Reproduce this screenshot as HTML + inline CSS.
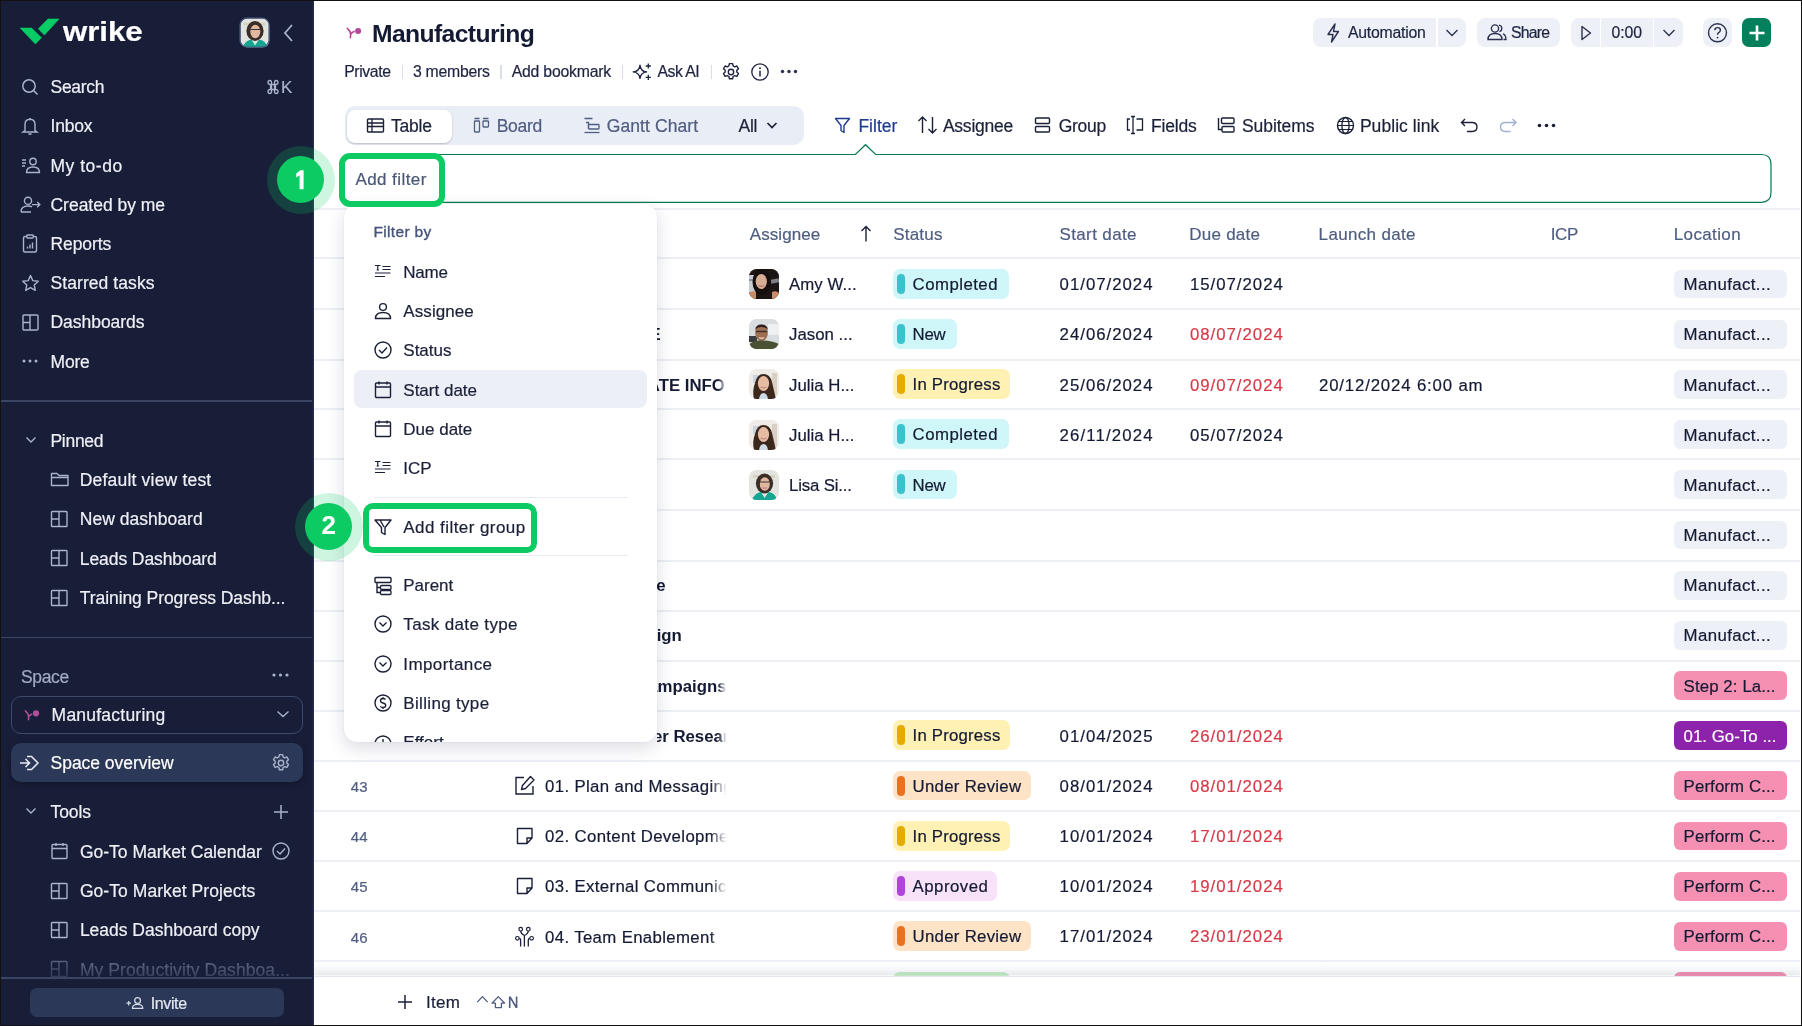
<!DOCTYPE html><html><head><meta charset="utf-8"><style>
html,body{margin:0;padding:0;}
body{width:1802px;height:1026px;position:relative;overflow:hidden;background:#fff;font-family:"Liberation Sans",sans-serif;will-change:transform;}
.t{position:absolute;white-space:pre;-webkit-text-stroke:0.2px currentColor;}
.b{position:absolute;}
</style></head><body>
<div class="b" style="left:0.00px;top:0.00px;width:314.00px;height:1026.00px;background:#181e38;"></div>
<svg class="b" style="left:0;top:0" width="70" height="50" viewBox="0 0 70 50"><path d="M20.2 28.1 L31.6 28.1 L41.5 37.7 L35.4 43.9 Z" fill="#06cc65" stroke="#06cc65" stroke-width="0.6" stroke-linejoin="round"/><path d="M38.3 28.7 L48 19 L59 19 L44.4 35.1 Z" fill="#06cc65" stroke="#06cc65" stroke-width="0.6" stroke-linejoin="round"/></svg>
<div class="t" style="left:63.40px;top:16px;font-size:28px;line-height:31px;color:#ffffff;transform-origin:0 0;transform:scaleX(1.1132);font-weight:700;">wrike</div>
<svg class="b" style="left:239px;top:17px" width="31" height="31" viewBox="0 0 31 31"><defs><clipPath id="ca"><rect x="1" y="1" width="29" height="29" rx="7"/></clipPath></defs><g clip-path="url(#ca)" transform="translate(0.5 0.5)"><rect width="30" height="30" fill="#e3e3df"/><rect x="4" y="5" width="22" height="3" fill="#d8d2c2"/><ellipse cx="15.5" cy="13.5" rx="8.6" ry="10" fill="#3a2d27"/><ellipse cx="15.8" cy="14" rx="5" ry="6.8" fill="#e0b8a0"/><path d="M11 12 H20.5" stroke="#3a3232" stroke-width="1.2"/><path d="M3 30 Q6 22.5 12 22 L15.5 28 L19.5 22 Q26 22.5 28 30Z" fill="#15a692"/></g><rect x="1" y="1" width="29" height="29" rx="7" stroke="#4a5a80" stroke-width="1.2" fill="none"/></svg>
<svg class="b" style="left:281px;top:22px;" width="14" height="22" viewBox="0 0 14 22" fill="none"><path d="M11 3 L4 11 L11 19" stroke="#a9b3ca" stroke-width="1.8" fill="none"/></svg>
<div class="t " style="left:50.50px;top:77px;font-size:17.5px;line-height:20px;color:#eef0f6;letter-spacing:-0.289px;">Search</div>
<div class="t " style="left:50.50px;top:116px;font-size:17.5px;line-height:20px;color:#eef0f6;letter-spacing:-0.202px;">Inbox</div>
<div class="t " style="left:50.50px;top:156px;font-size:17.5px;line-height:20px;color:#eef0f6;letter-spacing:0.518px;">My to-do</div>
<div class="t " style="left:50.50px;top:195px;font-size:17.5px;line-height:20px;color:#eef0f6;letter-spacing:-0.022px;">Created by me</div>
<div class="t " style="left:50.50px;top:234px;font-size:17.5px;line-height:20px;color:#eef0f6;letter-spacing:-0.079px;">Reports</div>
<div class="t " style="left:50.50px;top:273px;font-size:17.5px;line-height:20px;color:#eef0f6;letter-spacing:0.076px;">Starred tasks</div>
<div class="t " style="left:50.50px;top:312px;font-size:17.5px;line-height:20px;color:#eef0f6;letter-spacing:-0.039px;">Dashboards</div>
<div class="t " style="left:50.50px;top:352px;font-size:17.5px;line-height:20px;color:#eef0f6;letter-spacing:-0.189px;">More</div>
<svg class="b" style="left:20px;top:77px;" width="22" height="20" viewBox="0 0 22 20" fill="none"><circle cx="9" cy="9" r="6.2" stroke="#a9b3ca" stroke-width="1.5"/><path d="M13.5 13.5 L17.5 17.5" stroke="#a9b3ca" stroke-width="1.6"/></svg>
<svg class="b" style="left:20px;top:116px;" width="22" height="20" viewBox="0 0 22 20" fill="none"><path d="M5 14.5 L5 8.5 Q5 3.5 10 3.3 Q15 3.5 15 8.5 L15 14.5 L17 16 L3 16 Z" stroke="#a9b3ca" stroke-width="1.4" fill="none"/><path d="M8.5 17.5 Q10 19 11.5 17.5" stroke="#a9b3ca" stroke-width="1.4"/><path d="M10 2 L10 3.5" stroke="#a9b3ca" stroke-width="1.4"/></svg>
<svg class="b" style="left:20px;top:155px;" width="22" height="20" viewBox="0 0 22 20" fill="none"><path d="M2 5h4M2 8h4M2 11h3" stroke="#a9b3ca" stroke-width="1.3"/><circle cx="13" cy="6.5" r="3.2" stroke="#a9b3ca" stroke-width="1.4"/><path d="M6.5 17.5 Q6.5 12 13 12 Q19.5 12 19.5 17.5 Z" stroke="#a9b3ca" stroke-width="1.4"/></svg>
<svg class="b" style="left:20px;top:195px;" width="22" height="20" viewBox="0 0 22 20" fill="none"><circle cx="8" cy="5.8" r="3.6" stroke="#a9b3ca" stroke-width="1.4"/><path d="M1 17 Q1 11 8 11 Q10.5 11 12 11.8 M1 17 H11" stroke="#a9b3ca" stroke-width="1.4" fill="none"/><path d="M12 9.6 H19.8 M17.2 7 L19.8 9.6 L17.2 12.2" stroke="#a9b3ca" stroke-width="1.4" fill="none"/></svg>
<svg class="b" style="left:20px;top:234px;" width="22" height="20" viewBox="0 0 22 20" fill="none"><rect x="3.5" y="2.5" width="13" height="15.5" rx="1.5" stroke="#a9b3ca" stroke-width="1.4"/><rect x="6.8" y="1" width="6.4" height="3" rx="0.8" fill="#181e38" stroke="#a9b3ca" stroke-width="1.3"/><path d="M7.5 14.5v-2M10 14.5v-4M12.5 14.5v-6" stroke="#a9b3ca" stroke-width="1.4"/></svg>
<svg class="b" style="left:20px;top:273px;" width="22" height="20" viewBox="0 0 22 20" fill="none"><path d="M10.5 2.5 L12.8 7.6 L18.3 8.2 L14.2 11.9 L15.3 17.4 L10.5 14.6 L5.7 17.4 L6.8 11.9 L2.7 8.2 L8.2 7.6 Z" stroke="#a9b3ca" stroke-width="1.4" stroke-linejoin="round"/></svg>
<svg class="b" style="left:20px;top:312px;" width="22" height="20" viewBox="0 0 22 20" fill="none"><rect x="3" y="3" width="15" height="15" rx="1" stroke="#a9b3ca" stroke-width="1.4"/><path d="M10 3v15M3 10.5h7" stroke="#a9b3ca" stroke-width="1.4"/></svg>
<svg class="b" style="left:20px;top:351px;" width="22" height="20" viewBox="0 0 22 20" fill="none"><circle cx="4" cy="10" r="1.5" fill="#a9b3ca"/><circle cx="10" cy="10" r="1.5" fill="#a9b3ca"/><circle cx="16" cy="10" r="1.5" fill="#a9b3ca"/></svg>
<svg class="b" style="left:266px;top:79px;" width="14" height="16" viewBox="0 0 14 16" fill="none"><path d="M4.5 5.5h5v5h-5z M4.5 5.5 Q2 5.5 2 3.5 Q2 1.5 3.8 1.5 Q5.5 1.5 5.5 3.5 L5.5 12.5 Q5.5 14.5 3.8 14.5 Q2 14.5 2 12.5 Q2 10.5 4.5 10.5 M9.5 5.5 Q12 5.5 12 3.5 Q12 1.5 10.2 1.5 Q8.5 1.5 8.5 3.5 L8.5 12.5 Q8.5 14.5 10.2 14.5 Q12 14.5 12 12.5 Q12 10.5 9.5 10.5" stroke="#a9b3ca" stroke-width="1.3" fill="none"/></svg>
<div class="t " style="left:281.00px;top:78px;font-size:17px;line-height:19px;color:#a9b3ca;">K</div>
<div class="b" style="left:0.00px;top:400.00px;width:314.00px;height:1.50px;background:#3a4563;"></div>
<div class="b" style="left:0.00px;top:636.50px;width:314.00px;height:1.50px;background:#3a4563;"></div>
<svg class="b" style="left:24px;top:433px;" width="14" height="14" viewBox="0 0 14 14" fill="none"><path d="M2.5 4.5 L7 9 L11.5 4.5" stroke="#a9b3ca" stroke-width="1.4"/></svg>
<div class="t " style="left:50.50px;top:431px;font-size:17.5px;line-height:20px;color:#eef0f6;letter-spacing:-0.298px;">Pinned</div>
<div class="t " style="left:79.80px;top:470px;font-size:17.5px;line-height:20px;color:#eef0f6;letter-spacing:0.189px;">Default view test</div>
<svg class="b" style="left:49px;top:470px;" width="22" height="18" viewBox="0 0 22 18" fill="none"><path d="M2.5 3.5 L8 3.5 L10 5.5 L19 5.5 L19 15.5 L2.5 15.5 Z M2.5 7.5 L19 7.5" stroke="#a9b3ca" stroke-width="1.4" stroke-linejoin="round"/></svg>
<div class="t " style="left:79.80px;top:509px;font-size:17.5px;line-height:20px;color:#eef0f6;letter-spacing:0.028px;">New dashboard</div>
<svg class="b" style="left:49px;top:510px;" width="22" height="18" viewBox="0 0 22 18" fill="none"><rect x="2.5" y="1.5" width="15.5" height="15" rx="0.8" stroke="#a9b3ca" stroke-width="1.4"/><path d="M10 1.5v15M2.5 9h7.5" stroke="#a9b3ca" stroke-width="1.4"/></svg>
<div class="t " style="left:79.80px;top:549px;font-size:17.5px;line-height:20px;color:#eef0f6;letter-spacing:-0.082px;">Leads Dashboard</div>
<svg class="b" style="left:49px;top:549px;" width="22" height="18" viewBox="0 0 22 18" fill="none"><rect x="2.5" y="1.5" width="15.5" height="15" rx="0.8" stroke="#a9b3ca" stroke-width="1.4"/><path d="M10 1.5v15M2.5 9h7.5" stroke="#a9b3ca" stroke-width="1.4"/></svg>
<div class="t " style="left:79.80px;top:588px;font-size:17.5px;line-height:20px;color:#eef0f6;letter-spacing:-0.075px;">Training Progress Dashb...</div>
<svg class="b" style="left:49px;top:589px;" width="22" height="18" viewBox="0 0 22 18" fill="none"><rect x="2.5" y="1.5" width="15.5" height="15" rx="0.8" stroke="#a9b3ca" stroke-width="1.4"/><path d="M10 1.5v15M2.5 9h7.5" stroke="#a9b3ca" stroke-width="1.4"/></svg>
<div class="t " style="left:20.90px;top:667px;font-size:17.5px;line-height:20px;color:#a3abc0;letter-spacing:-0.329px;">Space</div>
<svg class="b" style="left:270px;top:668px;" width="22" height="14" viewBox="0 0 22 14" fill="none"><circle cx="4" cy="7" r="1.6" fill="#a9b3ca"/><circle cx="10.5" cy="7" r="1.6" fill="#a9b3ca"/><circle cx="17" cy="7" r="1.6" fill="#a9b3ca"/></svg>
<div class="b" style="left:11.00px;top:695.80px;width:292.00px;height:38.20px;border:1.3px solid #3e4a6a;border-radius:10px;box-sizing:border-box;"></div>
<svg class="b" style="left:16px;top:700px;" width="30" height="30" viewBox="0 0 30 30" fill="none"><path d="M9.4 10.8 Q12.3 13 12.6 16.5 L12.5 19.6 M15.6 14.3 Q13.5 15.2 12.6 16.8" stroke="#b04f9b" stroke-width="1.6" fill="none" stroke-linecap="round"/><circle cx="20" cy="13.3" r="3.1" fill="#b04f9b"/></svg>
<div class="t " style="left:51.60px;top:705px;font-size:17.5px;line-height:20px;color:#eef0f6;letter-spacing:0.226px;">Manufacturing</div>
<svg class="b" style="left:275px;top:708px;" width="16" height="12" viewBox="0 0 16 12" fill="none"><path d="M2.5 3.5 L8 8.5 L13.5 3.5" stroke="#a9b3ca" stroke-width="1.4"/></svg>
<div class="b" style="left:11.00px;top:743.40px;width:292.00px;height:38.80px;background:#2c3857;border-radius:10px;box-shadow:0 2px 6px rgba(0,0,0,0.25);"></div>
<svg class="b" style="left:18px;top:752px;" width="24" height="22" viewBox="0 0 24 22" fill="none"><path d="M2 11 L11 11 M7.5 7 L11.5 11 L7.5 15" stroke="#e8ebf3" stroke-width="1.6" fill="none"/><path d="M9 4.5 L13.5 4.5 L20 11 L13.5 17.5 L9 17.5" stroke="#e8ebf3" stroke-width="1.6" fill="none" stroke-linejoin="round"/></svg>
<div class="t " style="left:50.60px;top:753px;font-size:17.5px;line-height:20px;color:#ffffff;letter-spacing:-0.041px;">Space overview</div>
<svg class="b" style="left:271px;top:753px;" width="20" height="20" viewBox="0 0 20 20" fill="none"><path d="M8.4 1.6h3.2l.5 2.3 1.6.9 2.2-.8 1.6 2.8-1.7 1.5v1.8l1.7 1.5-1.6 2.8-2.2-.8-1.6.9-.5 2.3H8.4l-.5-2.3-1.6-.9-2.2.8-1.6-2.8 1.7-1.5V8.3L2.5 6.8l1.6-2.8 2.2.8 1.6-.9z" stroke="#a9b3ca" stroke-width="1.4" stroke-linejoin="round"/><circle cx="10" cy="10" r="2.7" stroke="#a9b3ca" stroke-width="1.4"/></svg>
<svg class="b" style="left:24px;top:804px;" width="14" height="14" viewBox="0 0 14 14" fill="none"><path d="M2.5 4.5 L7 9 L11.5 4.5" stroke="#a9b3ca" stroke-width="1.4"/></svg>
<div class="t " style="left:50.60px;top:802px;font-size:17.5px;line-height:20px;color:#eef0f6;letter-spacing:-0.113px;">Tools</div>
<svg class="b" style="left:272px;top:803px;" width="18" height="18" viewBox="0 0 18 18" fill="none"><path d="M9 2v14M2 9h14" stroke="#a9b3ca" stroke-width="1.5"/></svg>
<div class="t " style="left:79.90px;top:842px;font-size:17.5px;line-height:20px;color:#eef0f6;">Go-To Market Calendar</div>
<svg class="b" style="left:49px;top:842px;" width="22" height="18" viewBox="0 0 22 18" fill="none"><rect x="3" y="2.5" width="15" height="14" rx="1" stroke="#a9b3ca" stroke-width="1.4"/><path d="M3 6.5h15M7 1v3M14 1v3" stroke="#a9b3ca" stroke-width="1.4"/></svg>
<div class="t " style="left:79.90px;top:881px;font-size:17.5px;line-height:20px;color:#eef0f6;letter-spacing:0.062px;">Go-To Market Projects</div>
<svg class="b" style="left:49px;top:882px;" width="22" height="18" viewBox="0 0 22 18" fill="none"><rect x="2.5" y="1.5" width="15.5" height="15" rx="0.8" stroke="#a9b3ca" stroke-width="1.4"/><path d="M10 1.5v15M2.5 9h7.5" stroke="#a9b3ca" stroke-width="1.4"/></svg>
<div class="t " style="left:79.90px;top:920px;font-size:17.5px;line-height:20px;color:#eef0f6;letter-spacing:-0.014px;">Leads Dashboard copy</div>
<svg class="b" style="left:49px;top:921px;" width="22" height="18" viewBox="0 0 22 18" fill="none"><rect x="2.5" y="1.5" width="15.5" height="15" rx="0.8" stroke="#a9b3ca" stroke-width="1.4"/><path d="M10 1.5v15M2.5 9h7.5" stroke="#a9b3ca" stroke-width="1.4"/></svg>
<div class="b" style="left:0;top:940px;width:314px;height:37px;overflow:hidden;"><div class="b" style="left:0;top:-940px;width:314px;height:1026px;">
<div class="t " style="left:79.90px;top:960px;font-size:17.5px;line-height:20px;color:#6a7290;letter-spacing:0.075px;">My Productivity Dashboa...</div>
<svg class="b" style="left:49px;top:960px;" width="22" height="18" viewBox="0 0 22 18" fill="none"><rect x="2.5" y="1.5" width="15.5" height="15" rx="0.8" stroke="#5e6684" stroke-width="1.4"/><path d="M10 1.5v15M2.5 9h7.5" stroke="#5e6684" stroke-width="1.4"/></svg>
</div></div>
<svg class="b" style="left:271px;top:841px;" width="20" height="20" viewBox="0 0 20 20" fill="none"><circle cx="10" cy="10" r="8" stroke="#a9b3ca" stroke-width="1.4"/><path d="M6 10 L9 13 L14 7.5" stroke="#a9b3ca" stroke-width="1.4"/></svg>
<div class="b" style="left:0.00px;top:958.00px;width:314.00px;height:19.40px;background:linear-gradient(to bottom, rgba(24,30,56,0) 0%, rgba(24,30,56,0.6) 100%);"></div>
<div class="b" style="left:0.00px;top:977.00px;width:314.00px;height:1.60px;background:#3a4563;"></div>
<div class="b" style="left:30.30px;top:987.80px;width:253.60px;height:29.40px;background:#2c3857;border-radius:7px;"></div>
<svg class="b" style="left:120px;top:990px" width="30" height="24" viewBox="120 990 30 24" fill="none"><path d="M126.4 1003.2h4.6M128.7 1000.9v4.6" stroke="#d5dbe8" stroke-width="1.2"/><circle cx="137.6" cy="1000.4" r="2.9" stroke="#d5dbe8" stroke-width="1.25"/><path d="M132.4 1008.4 Q132.4 1004.3 137.6 1004.3 Q142.8 1004.3 142.8 1008.4 Z" stroke="#d5dbe8" stroke-width="1.25" stroke-linejoin="round"/></svg>
<div class="t " style="left:150.70px;top:995px;font-size:16px;line-height:17px;color:#e3e7f0;letter-spacing:-0.368px;">Invite</div>
<div class="b" style="left:312.00px;top:0.00px;width:2.00px;height:1026.00px;background:linear-gradient(to right, rgba(24,30,56,1), rgba(40,50,80,1));"></div>
<svg class="b" style="left:340px;top:20px;" width="24" height="24" viewBox="0 0 24 24" fill="none"><path d="M7.3 8.3 Q10.3 10.8 10.7 13.8 L10.4 17.8 M14 11.4 Q11.8 12.4 10.9 14" stroke="#b3479b" stroke-width="1.6" fill="none" stroke-linecap="round"/><circle cx="18.1" cy="11" r="3" fill="#b3479b"/></svg>
<div class="t " style="left:372.00px;top:20px;font-size:24.7px;line-height:27px;color:#141a33;font-weight:700;-webkit-text-stroke:0;letter-spacing:-0.611px;">Manufacturing</div>
<div class="t " style="left:344.20px;top:63px;font-size:15.8px;line-height:17px;color:#1d2340;letter-spacing:-0.395px;">Private</div>
<div class="b" style="left:401.80px;top:65.00px;width:1.20px;height:14.00px;background:#d9dde8;"></div>
<div class="t " style="left:413.00px;top:63px;font-size:15.8px;line-height:17px;color:#1d2340;letter-spacing:-0.277px;">3 members</div>
<div class="b" style="left:500.40px;top:65.00px;width:1.20px;height:14.00px;background:#d9dde8;"></div>
<div class="t " style="left:511.70px;top:63px;font-size:15.8px;line-height:17px;color:#1d2340;letter-spacing:-0.215px;">Add bookmark</div>
<div class="b" style="left:622.00px;top:65.00px;width:1.20px;height:14.00px;background:#d9dde8;"></div>
<svg class="b" style="left:620px;top:55px;" width="36" height="32" viewBox="0 0 36 32" fill="none"><path d="M13.2 16.9 Q19.2 16.3 20 10.3 Q20.8 16.3 26.6 16.9 Q20.8 17.6 20 23.4 Q19.2 17.6 13.2 16.9 Z" stroke="#1d2340" stroke-width="1.4" stroke-linejoin="round"/><path d="M28.3 8.4v5.2M25.7 11h5.2M28.3 19.8v5.2M25.7 22.4h5.2" stroke="#1d2340" stroke-width="1.3"/></svg>
<div class="t " style="left:657.60px;top:63px;font-size:15.8px;line-height:17px;color:#1d2340;letter-spacing:-0.557px;">Ask AI</div>
<div class="b" style="left:710.50px;top:65.00px;width:1.20px;height:14.00px;background:#d9dde8;"></div>
<svg class="b" style="left:721px;top:62px;" width="20" height="20" viewBox="0 0 20 20" fill="none"><path d="M8.4 1.6h3.2l.5 2.3 1.6.9 2.2-.8 1.6 2.8-1.7 1.5v1.8l1.7 1.5-1.6 2.8-2.2-.8-1.6.9-.5 2.3H8.4l-.5-2.3-1.6-.9-2.2.8-1.6-2.8 1.7-1.5V8.3L2.5 6.8l1.6-2.8 2.2.8 1.6-.9z" stroke="#1d2340" stroke-width="1.4" stroke-linejoin="round"/><circle cx="10" cy="10" r="2.7" stroke="#1d2340" stroke-width="1.4"/></svg>
<svg class="b" style="left:750px;top:62px;" width="20" height="20" viewBox="0 0 20 20" fill="none"><circle cx="10" cy="10" r="8.2" stroke="#1d2340" stroke-width="1.3"/><path d="M10 8.8v5.8" stroke="#1d2340" stroke-width="1.5"/><circle cx="10" cy="6.2" r="0.95" fill="#1d2340"/></svg>
<svg class="b" style="left:779px;top:62px;" width="20" height="20" viewBox="0 0 20 20" fill="none"><circle cx="3.5" cy="9.5" r="1.7" fill="#2a3150"/><circle cx="10" cy="9.5" r="1.7" fill="#2a3150"/><circle cx="16.5" cy="9.5" r="1.7" fill="#2a3150"/></svg>
<div class="b" style="left:1313.40px;top:18.10px;width:152.90px;height:29.30px;background:#edf0f6;border-radius:8px;"></div>
<div class="b" style="left:1436.00px;top:18.10px;width:1.50px;height:29.30px;background:#ffffff;"></div>
<svg class="b" style="left:1324px;top:22px;" width="18" height="22" viewBox="0 0 18 22" fill="none"><path d="M11 2 L4 12.5 L9 12.5 L7.5 20 L14.5 9.5 L9.5 9.5 Z" stroke="#2a3150" stroke-width="1.4" stroke-linejoin="round"/></svg>
<div class="t " style="left:1347.90px;top:24px;font-size:15.8px;line-height:17px;color:#1d2340;letter-spacing:-0.213px;">Automation</div>
<svg class="b" style="left:1444px;top:27px;" width="16" height="12" viewBox="0 0 16 12" fill="none"><path d="M2.5 3 L8 8.5 L13.5 3" stroke="#2a3150" stroke-width="1.3"/></svg>
<div class="b" style="left:1476.90px;top:18.10px;width:83.50px;height:29.30px;background:#edf0f6;border-radius:8px;"></div>
<svg class="b" style="left:1486px;top:22px;" width="22" height="20" viewBox="0 0 22 20" fill="none"><circle cx="9" cy="6.5" r="3.6" stroke="#2a3150" stroke-width="1.4"/><path d="M2 17.5 Q2 11.5 9 11.5 Q16 11.5 16 17.5 Z" stroke="#2a3150" stroke-width="1.4"/><path d="M13 3.2 Q15.8 3.6 15.8 6.5 Q15.8 9 13.5 9.6 M17 11.8 Q20 12.8 20 17.5 L17.5 17.5" stroke="#2a3150" stroke-width="1.3"/></svg>
<div class="t " style="left:1511.00px;top:24px;font-size:15.8px;line-height:17px;color:#1d2340;letter-spacing:-0.790px;">Share</div>
<div class="b" style="left:1571.00px;top:18.10px;width:112.00px;height:29.30px;background:#edf0f6;border-radius:8px;"></div>
<div class="b" style="left:1599.60px;top:18.10px;width:1.40px;height:29.30px;background:#ffffff;"></div>
<div class="b" style="left:1652.50px;top:18.10px;width:1.50px;height:29.30px;background:#ffffff;"></div>
<svg class="b" style="left:1578px;top:23px;" width="16" height="20" viewBox="0 0 16 20" fill="none"><path d="M4 3.5 L12.5 10 L4 16.5 Z" stroke="#2a3150" stroke-width="1.4" stroke-linejoin="round"/></svg>
<div class="t " style="left:1611.40px;top:24px;font-size:15.8px;line-height:17px;color:#1d2340;letter-spacing:-0.049px;">0:00</div>
<svg class="b" style="left:1661px;top:27px;" width="16" height="12" viewBox="0 0 16 12" fill="none"><path d="M2.5 3 L8 8.5 L13.5 3" stroke="#2a3150" stroke-width="1.3"/></svg>
<div class="b" style="left:1703.00px;top:18.10px;width:28.80px;height:29.30px;background:#edf0f6;border-radius:8px;"></div>
<svg class="b" style="left:1706px;top:22px;" width="24" height="22" viewBox="0 0 24 22" fill="none"><circle cx="11.5" cy="10.8" r="9" stroke="#2a3150" stroke-width="1.4"/><path d="M8.8 8.3 Q8.8 5.6 11.6 5.6 Q14.4 5.6 14.4 8.1 Q14.4 9.8 12.4 10.8 Q11.5 11.3 11.5 12.8" stroke="#2a3150" stroke-width="1.4" fill="none"/><circle cx="11.5" cy="15.6" r="0.95" fill="#2a3150"/></svg>
<div class="b" style="left:1742.00px;top:18.00px;width:29.30px;height:29.40px;background:#06805c;border-radius:7px;"></div>
<svg class="b" style="left:1748px;top:24px;" width="18" height="18" viewBox="0 0 18 18" fill="none"><path d="M9 1.5v15M1.5 9h15" stroke="#ffffff" stroke-width="2.6"/></svg>
<div class="b" style="left:344.50px;top:106.40px;width:459.00px;height:38.90px;background:#e9edf6;border-radius:10px;"></div>
<div class="b" style="left:346.50px;top:109.60px;width:105.20px;height:33.00px;background:#ffffff;border-radius:8px;box-shadow:0 1px 2px rgba(30,40,80,0.25);"></div>
<svg class="b" style="left:365px;top:116px;" width="22" height="20" viewBox="0 0 22 20" fill="none"><rect x="2.5" y="3" width="16" height="13" rx="1" stroke="#1b2038" stroke-width="1.4"/><path d="M2.5 7h16M2.5 10.5h16M7 3v13" stroke="#1b2038" stroke-width="1.3"/></svg>
<div class="t " style="left:391.00px;top:116px;font-size:17.5px;line-height:20px;color:#1b2038;letter-spacing:-0.208px;">Table</div>
<svg class="b" style="left:472px;top:116px;" width="20" height="20" viewBox="0 0 20 20" fill="none"><rect x="2.5" y="5" width="5" height="11" rx="0.8" stroke="#4f5d80" stroke-width="1.3"/><rect x="11" y="5" width="5.5" height="6" rx="0.8" stroke="#4f5d80" stroke-width="1.3"/><path d="M2.5 2.5h5M11 2.5h5.5" stroke="#4f5d80" stroke-width="1.3"/></svg>
<div class="t " style="left:496.70px;top:116px;font-size:17.5px;line-height:20px;color:#4f5d80;letter-spacing:-0.299px;">Board</div>
<svg class="b" style="left:582px;top:116px;" width="20" height="20" viewBox="0 0 20 20" fill="none"><path d="M2.5 2.5h8M4 6.5h2.5v6.5" stroke="#4f5d80" stroke-width="1.3" fill="none"/><rect x="6.5" y="8.5" width="10.5" height="4.5" rx="0.8" stroke="#4f5d80" stroke-width="1.3"/><path d="M2.5 16.5h15" stroke="#4f5d80" stroke-width="1.3"/></svg>
<div class="t " style="left:606.70px;top:116px;font-size:17.5px;line-height:20px;color:#4f5d80;letter-spacing:0.095px;">Gantt Chart</div>
<div class="t " style="left:738.50px;top:116px;font-size:17.5px;line-height:20px;color:#1b2038;letter-spacing:-0.275px;">All</div>
<svg class="b" style="left:765px;top:120px;" width="14" height="12" viewBox="0 0 14 12" fill="none"><path d="M2.5 3 L7 7.5 L11.5 3" stroke="#1b2038" stroke-width="1.7"/></svg>
<svg class="b" style="left:833px;top:115px;" width="19" height="20" viewBox="0 0 19 20" fill="none"><path d="M2.5 3.5 L16.5 3.5 L11 10.5 L11 17.5 L8 15.5 L8 10.5 Z" stroke="#1f3b90" stroke-width="1.4" stroke-linejoin="round"/></svg>
<div class="t " style="left:858.40px;top:116px;font-size:17.5px;line-height:20px;color:#1f3b90;letter-spacing:0.023px;">Filter</div>
<svg class="b" style="left:917px;top:114px;" width="22" height="22" viewBox="0 0 22 22" fill="none"><path d="M5.5 19 L5.5 3 M1.5 7 L5.5 3 L9.5 7 M15.5 3 L15.5 19 M11.5 15 L15.5 19 L19.5 15" stroke="#1b2038" stroke-width="1.4" fill="none"/></svg>
<div class="t " style="left:942.90px;top:116px;font-size:17.5px;line-height:20px;color:#1b2038;letter-spacing:-0.227px;">Assignee</div>
<svg class="b" style="left:1033px;top:115px;" width="20" height="20" viewBox="0 0 20 20" fill="none"><rect x="2.5" y="3" width="14" height="5.5" rx="1" stroke="#1b2038" stroke-width="1.4"/><rect x="2.5" y="11.5" width="14" height="5.5" rx="1" stroke="#1b2038" stroke-width="1.4"/></svg>
<div class="t " style="left:1058.80px;top:116px;font-size:17.5px;line-height:20px;color:#1b2038;letter-spacing:-0.308px;">Group</div>
<svg class="b" style="left:1125px;top:114px;" width="22" height="22" viewBox="0 0 22 22" fill="none"><path d="M5 5 L2.5 5 L2.5 16 L5 16 M11.5 5 L17.5 5 L17.5 16 L11.5 16 M6 2.5 L10 2.5 M8 2.5 L8 19.5 M6 19.5 L10 19.5" stroke="#1b2038" stroke-width="1.3" fill="none"/></svg>
<div class="t " style="left:1151.00px;top:116px;font-size:17.5px;line-height:20px;color:#1b2038;letter-spacing:-0.196px;">Fields</div>
<svg class="b" style="left:1216px;top:115px;" width="22" height="20" viewBox="0 0 22 20" fill="none"><path d="M2.5 3 L2.5 14.5 L6 14.5" stroke="#1b2038" stroke-width="1.4" fill="none"/><rect x="5.5" y="3" width="12.5" height="5.5" rx="1" stroke="#1b2038" stroke-width="1.4"/><rect x="6" y="11.5" width="12" height="5.5" rx="1" stroke="#1b2038" stroke-width="1.4"/></svg>
<div class="t " style="left:1242.00px;top:116px;font-size:17.5px;line-height:20px;color:#1b2038;letter-spacing:-0.064px;">Subitems</div>
<svg class="b" style="left:1335px;top:115px;" width="21" height="21" viewBox="0 0 21 21" fill="none"><circle cx="10.5" cy="10.5" r="8" stroke="#1b2038" stroke-width="1.4"/><ellipse cx="10.5" cy="10.5" rx="3.6" ry="8" stroke="#1b2038" stroke-width="1.3"/><path d="M2.5 10.5h16M3.8 6.5h13.4M3.8 14.5h13.4" stroke="#1b2038" stroke-width="1.2"/></svg>
<div class="t " style="left:1359.90px;top:116px;font-size:17.5px;line-height:20px;color:#1b2038;letter-spacing:0.062px;">Public link</div>
<svg class="b" style="left:1459px;top:116px;" width="22" height="18" viewBox="0 0 22 18" fill="none"><path d="M6 3 L2.5 6.5 L6 10 M2.5 6.5 L13 6.5 Q18 6.5 18 11 Q18 15.5 13 15.5 L8 15.5" stroke="#1b2038" stroke-width="1.4" fill="none"/></svg>
<svg class="b" style="left:1498px;top:116px;" width="22" height="18" viewBox="0 0 22 18" fill="none"><path d="M14.5 3 L18 6.5 L14.5 10 M18 6.5 L7.5 6.5 Q2.5 6.5 2.5 11 Q2.5 15.5 7.5 15.5 L12.5 15.5" stroke="#9fb0d0" stroke-width="1.4" fill="none"/></svg>
<svg class="b" style="left:1536px;top:116px;" width="22" height="18" viewBox="0 0 22 18" fill="none"><circle cx="3.5" cy="9.5" r="1.8" fill="#1b2038"/><circle cx="10.5" cy="9.5" r="1.8" fill="#1b2038"/><circle cx="17.5" cy="9.5" r="1.8" fill="#1b2038"/></svg>
<svg class="b" style="left:330px;top:140px" width="1450" height="70" viewBox="330 140 1450 70" fill="none"><path d="M353.5 154.5 L855.4 154.5 L865.5 144.7 L875.6 154.5 L1761.3 154.5 Q1771 154.5 1771 164.3 L1771 192.5 Q1771 202.3 1761.3 202.3 L353.5 202.3 Q342.8 202.3 342.8 192.5 L342.8 164.3 Q342.8 154.5 353.5 154.5 Z" fill="#ffffff" stroke="#067a52" stroke-width="1.2"/></svg>
<div class="t " style="left:355.50px;top:170px;font-size:17px;line-height:19px;color:#4a5778;letter-spacing:0.413px;">Add filter</div>
<div class="b" style="left:314.00px;top:208.00px;width:1486.00px;height:2.00px;background:#eef0f5;"></div>
<div class="t " style="left:749.80px;top:225px;font-size:17px;line-height:19px;color:#4f5d80;letter-spacing:0.067px;">Assignee</div>
<svg class="b" style="left:857px;top:224px;" width="18" height="19" viewBox="0 0 18 19" fill="none"><path d="M9 17.5 L9 2.5 M4.5 7 L9 2.5 L13.5 7" stroke="#1b2038" stroke-width="1.4" fill="none"/></svg>
<div class="t " style="left:893.20px;top:225px;font-size:17px;line-height:19px;color:#4f5d80;letter-spacing:0.222px;">Status</div>
<div class="t " style="left:1059.50px;top:225px;font-size:17px;line-height:19px;color:#4f5d80;letter-spacing:0.366px;">Start date</div>
<div class="t " style="left:1189.30px;top:225px;font-size:17px;line-height:19px;color:#4f5d80;letter-spacing:0.230px;">Due date</div>
<div class="t " style="left:1318.60px;top:225px;font-size:17px;line-height:19px;color:#4f5d80;letter-spacing:0.333px;">Launch date</div>
<div class="t " style="left:1550.80px;top:225px;font-size:17px;line-height:19px;color:#4f5d80;letter-spacing:-0.420px;">ICP</div>
<div class="t " style="left:1673.80px;top:225px;font-size:17px;line-height:19px;color:#4f5d80;letter-spacing:0.362px;">Location</div>
<div class="b" style="left:314.00px;top:257.00px;width:1486.00px;height:2.00px;background:#eceff4;"></div>
<div class="b" style="left:314.00px;top:308.00px;width:1486.00px;height:2.00px;background:#eceff4;"></div>
<div class="b" style="left:314.00px;top:359.00px;width:1486.00px;height:2.00px;background:#eceff4;"></div>
<div class="b" style="left:314.00px;top:408.00px;width:1486.00px;height:2.00px;background:#eceff4;"></div>
<div class="b" style="left:314.00px;top:458.00px;width:1486.00px;height:2.00px;background:#eceff4;"></div>
<div class="b" style="left:314.00px;top:509.00px;width:1486.00px;height:2.00px;background:#eceff4;"></div>
<div class="b" style="left:314.00px;top:560.00px;width:1486.00px;height:2.00px;background:#eceff4;"></div>
<div class="b" style="left:314.00px;top:610.00px;width:1486.00px;height:2.00px;background:#eceff4;"></div>
<div class="b" style="left:314.00px;top:660.00px;width:1486.00px;height:2.00px;background:#eceff4;"></div>
<div class="b" style="left:314.00px;top:710.00px;width:1486.00px;height:2.00px;background:#eceff4;"></div>
<div class="b" style="left:314.00px;top:760.00px;width:1486.00px;height:2.00px;background:#eceff4;"></div>
<div class="b" style="left:314.00px;top:810.00px;width:1486.00px;height:2.00px;background:#eceff4;"></div>
<div class="b" style="left:314.00px;top:860.00px;width:1486.00px;height:2.00px;background:#eceff4;"></div>
<div class="b" style="left:314.00px;top:910.00px;width:1486.00px;height:2.00px;background:#eceff4;"></div>
<div class="b" style="left:314.00px;top:960.00px;width:1486.00px;height:2.00px;background:#eceff4;"></div>
<svg class="b" style="left:749px;top:269px" width="30" height="30" viewBox="0 0 30 30"><defs><clipPath id="av0"><rect width="30" height="30" rx="7.5"/></clipPath></defs><g clip-path="url(#av0)"><rect width="30" height="30" fill="#1b1513"/><rect x="0" y="6" width="7" height="18" fill="#c9cdd3"/><rect x="0" y="10" width="7" height="2" fill="#8a9099"/><rect x="22" y="10" width="8" height="4" fill="#7d7f86" transform="rotate(-10 26 12)"/><ellipse cx="12.5" cy="13" rx="9" ry="13" fill="#150f0d"/><ellipse cx="12.3" cy="12.5" rx="5.6" ry="7.6" fill="#d8ad96"/><path d="M9.5 16.5 Q12.3 18.2 15 16.5" stroke="#b47a76" stroke-width="1.2" fill="none"/><path d="M0 24 Q3 21 7 23 L7 30 L0 30Z M23 23 Q27 21 30 24 L30 30 L23 30Z" fill="#c98c69"/></g></svg>
<div class="t " style="left:789.00px;top:275px;font-size:16.8px;line-height:19px;color:#141a33;letter-spacing:0.071px;">Amy W...</div>
<div class="b" style="left:892.50px;top:268.90px;width:116.20px;height:29.80px;background:#cff7f9;border-radius:7px;"></div>
<div class="b" style="left:897.10px;top:273.80px;width:7.60px;height:20.00px;background:#3bc2cc;border-radius:4px;"></div>
<div class="t " style="left:912.60px;top:275px;font-size:16.8px;line-height:19px;color:#141a33;letter-spacing:0.470px;">Completed</div>
<div class="t " style="left:1059.60px;top:275px;font-size:16.8px;line-height:19px;color:#141a33;letter-spacing:0.992px;">01/07/2024</div>
<div class="t " style="left:1189.90px;top:275px;font-size:16.8px;line-height:19px;color:#141a33;letter-spacing:0.992px;">15/07/2024</div>
<div class="b" style="left:1673.80px;top:269.70px;width:113.40px;height:28.80px;background:#edf0f6;border-radius:6px;"></div>
<div class="t " style="left:1683.60px;top:275px;font-size:16.8px;line-height:19px;color:#141a33;letter-spacing:0.400px;">Manufact...</div>
<div class="b" style="left:657px;top:310px;width:69px;height:40px;overflow:hidden;">
<div class="t" style="right:65.20px;top:15px;font-size:16.8px;line-height:19px;color:#141a33;font-weight:700;-webkit-text-stroke:0;">UPDATE</div>
</div>
<svg class="b" style="left:749px;top:319px" width="30" height="30" viewBox="0 0 30 30"><defs><clipPath id="av1"><rect width="30" height="30" rx="7.5"/></clipPath></defs><g clip-path="url(#av1)"><rect width="30" height="30" fill="#d9dde0"/><rect x="19" y="5" width="11" height="11" fill="#eef0f2"/><rect x="0" y="17" width="8" height="6" fill="#3a3c40"/><ellipse cx="12.5" cy="14" rx="6.4" ry="8.2" fill="#a06f52"/><path d="M6.2 11 Q6.5 5.5 12.5 5.5 Q18.5 5.5 18.8 11 Q17 8 12.5 8 Q8 8 6.2 11Z" fill="#2a1f1a"/><path d="M7 12.5 H18" stroke="#3a3030" stroke-width="1.3"/><path d="M10 18.5 Q12.5 20 15 18.5" stroke="#e8d0c8" stroke-width="1.3" fill="none"/><path d="M0 30 L0 26 Q3 21 12.5 21.5 Q22 21 30 25 L30 30Z" fill="#4b5133"/></g></svg>
<div class="t " style="left:789.00px;top:325px;font-size:16.8px;line-height:19px;color:#141a33;letter-spacing:0.025px;">Jason ...</div>
<div class="b" style="left:892.50px;top:319.07px;width:64.20px;height:29.80px;background:#cff7f9;border-radius:7px;"></div>
<div class="b" style="left:897.10px;top:323.97px;width:7.60px;height:20.00px;background:#3bc2cc;border-radius:4px;"></div>
<div class="t " style="left:912.60px;top:325px;font-size:16.8px;line-height:19px;color:#141a33;letter-spacing:-0.304px;">New</div>
<div class="t " style="left:1059.60px;top:325px;font-size:16.8px;line-height:19px;color:#141a33;letter-spacing:0.992px;">24/06/2024</div>
<div class="t " style="left:1189.90px;top:325px;font-size:16.8px;line-height:19px;color:#d63a47;letter-spacing:0.992px;">08/07/2024</div>
<div class="b" style="left:1673.80px;top:319.87px;width:113.40px;height:28.80px;background:#edf0f6;border-radius:6px;"></div>
<div class="t " style="left:1683.60px;top:325px;font-size:16.8px;line-height:19px;color:#141a33;letter-spacing:0.400px;">Manufact...</div>
<div class="b" style="left:657px;top:361px;width:69px;height:40px;overflow:hidden;-webkit-mask-image:linear-gradient(to right,#000 88.4%,rgba(0,0,0,0.05) 100%);">
<div class="t" style="left:-44.60px;top:15px;font-size:16.8px;line-height:19px;color:#141a33;font-weight:700;-webkit-text-stroke:0;">UPDATE INFO</div>
</div>
<svg class="b" style="left:749px;top:369px" width="30" height="30" viewBox="0 0 30 30"><defs><clipPath id="av2"><rect width="30" height="30" rx="7.5"/></clipPath></defs><g clip-path="url(#av2)"><rect width="30" height="30" fill="#efebe6"/><rect x="23" y="4" width="5" height="22" fill="#d9cfc4"/><rect x="4" y="6" width="6" height="8" fill="#c9d4de"/><path d="M5 30 Q3 22 6 14 Q8 5 14.5 5 Q21 5 23 13 Q25 22 27 30Z" fill="#3b271c"/><ellipse cx="14.5" cy="14.5" rx="5.6" ry="7.4" fill="#e6bda3"/><path d="M11.5 18 Q14.5 19.8 17.5 18" stroke="#c98a86" stroke-width="1.1" fill="none"/><path d="M10 30 Q11 24 14.5 24 Q18 24 19 30Z" fill="#cddbe6"/></g></svg>
<div class="t " style="left:789.00px;top:376px;font-size:16.8px;line-height:19px;color:#141a33;letter-spacing:0.016px;">Julia H...</div>
<div class="b" style="left:892.50px;top:369.24px;width:117.50px;height:29.80px;background:#fff0b3;border-radius:7px;"></div>
<div class="b" style="left:897.10px;top:374.14px;width:7.60px;height:20.00px;background:#e6ab00;border-radius:4px;"></div>
<div class="t " style="left:912.60px;top:375px;font-size:16.8px;line-height:19px;color:#141a33;letter-spacing:0.190px;">In Progress</div>
<div class="t " style="left:1059.60px;top:376px;font-size:16.8px;line-height:19px;color:#141a33;letter-spacing:0.992px;">25/06/2024</div>
<div class="t " style="left:1189.90px;top:376px;font-size:16.8px;line-height:19px;color:#d63a47;letter-spacing:0.992px;">09/07/2024</div>
<div class="t " style="left:1319.00px;top:376px;font-size:16.8px;line-height:19px;color:#141a33;letter-spacing:0.839px;">20/12/2024 6:00 am</div>
<div class="b" style="left:1673.80px;top:370.04px;width:113.40px;height:28.80px;background:#edf0f6;border-radius:6px;"></div>
<div class="t " style="left:1683.60px;top:376px;font-size:16.8px;line-height:19px;color:#141a33;letter-spacing:0.400px;">Manufact...</div>
<svg class="b" style="left:749px;top:420px" width="30" height="30" viewBox="0 0 30 30"><defs><clipPath id="av3"><rect width="30" height="30" rx="7.5"/></clipPath></defs><g clip-path="url(#av3)"><rect width="30" height="30" fill="#efebe6"/><rect x="23" y="4" width="5" height="22" fill="#d9cfc4"/><rect x="4" y="6" width="6" height="8" fill="#c9d4de"/><path d="M5 30 Q3 22 6 14 Q8 5 14.5 5 Q21 5 23 13 Q25 22 27 30Z" fill="#3b271c"/><ellipse cx="14.5" cy="14.5" rx="5.6" ry="7.4" fill="#e6bda3"/><path d="M11.5 18 Q14.5 19.8 17.5 18" stroke="#c98a86" stroke-width="1.1" fill="none"/><path d="M10 30 Q11 24 14.5 24 Q18 24 19 30Z" fill="#cddbe6"/></g></svg>
<div class="t " style="left:789.00px;top:426px;font-size:16.8px;line-height:19px;color:#141a33;letter-spacing:0.016px;">Julia H...</div>
<div class="b" style="left:892.50px;top:419.41px;width:116.20px;height:29.80px;background:#cff7f9;border-radius:7px;"></div>
<div class="b" style="left:897.10px;top:424.31px;width:7.60px;height:20.00px;background:#3bc2cc;border-radius:4px;"></div>
<div class="t " style="left:912.60px;top:425px;font-size:16.8px;line-height:19px;color:#141a33;letter-spacing:0.470px;">Completed</div>
<div class="t " style="left:1059.60px;top:426px;font-size:16.8px;line-height:19px;color:#141a33;letter-spacing:1.130px;">26/11/2024</div>
<div class="t " style="left:1189.90px;top:426px;font-size:16.8px;line-height:19px;color:#141a33;letter-spacing:0.992px;">05/07/2024</div>
<div class="b" style="left:1673.80px;top:420.21px;width:113.40px;height:28.80px;background:#edf0f6;border-radius:6px;"></div>
<div class="t " style="left:1683.60px;top:426px;font-size:16.8px;line-height:19px;color:#141a33;letter-spacing:0.400px;">Manufact...</div>
<svg class="b" style="left:749px;top:470px" width="30" height="30" viewBox="0 0 30 30"><defs><clipPath id="av4"><rect width="30" height="30" rx="7.5"/></clipPath></defs><g clip-path="url(#av4)"><rect width="30" height="30" fill="#e3e3df"/><rect x="4" y="5" width="22" height="3" fill="#d8d2c2"/><ellipse cx="15.5" cy="13.5" rx="8.6" ry="10" fill="#3a2d27"/><ellipse cx="15.8" cy="14" rx="5" ry="6.8" fill="#e0b8a0"/><path d="M11 12 H20.5" stroke="#3a3232" stroke-width="1.2"/><path d="M13.5 17.5 Q15.8 19 18 17.5" stroke="#c27a80" stroke-width="1.1" fill="none"/><path d="M3 30 Q6 22.5 12 22 L15.5 28 L19.5 22 Q26 22.5 28 30Z" fill="#15a692"/></g></svg>
<div class="t " style="left:789.00px;top:476px;font-size:16.8px;line-height:19px;color:#141a33;letter-spacing:-0.158px;">Lisa Si...</div>
<div class="b" style="left:892.50px;top:469.58px;width:64.20px;height:29.80px;background:#cff7f9;border-radius:7px;"></div>
<div class="b" style="left:897.10px;top:474.48px;width:7.60px;height:20.00px;background:#3bc2cc;border-radius:4px;"></div>
<div class="t " style="left:912.60px;top:476px;font-size:16.8px;line-height:19px;color:#141a33;letter-spacing:-0.304px;">New</div>
<div class="b" style="left:1673.80px;top:470.38px;width:113.40px;height:28.80px;background:#edf0f6;border-radius:6px;"></div>
<div class="t " style="left:1683.60px;top:476px;font-size:16.8px;line-height:19px;color:#141a33;letter-spacing:0.400px;">Manufact...</div>
<div class="b" style="left:1673.80px;top:520.55px;width:113.40px;height:28.80px;background:#edf0f6;border-radius:6px;"></div>
<div class="t " style="left:1683.60px;top:526px;font-size:16.8px;line-height:19px;color:#141a33;letter-spacing:0.400px;">Manufact...</div>
<div class="b" style="left:657px;top:561px;width:69px;height:40px;overflow:hidden;">
<div class="t" style="right:60.40px;top:15px;font-size:16.8px;line-height:19px;color:#141a33;font-weight:700;-webkit-text-stroke:0;">Prepare</div>
</div>
<div class="b" style="left:1673.80px;top:570.72px;width:113.40px;height:28.80px;background:#edf0f6;border-radius:6px;"></div>
<div class="t " style="left:1683.60px;top:576px;font-size:16.8px;line-height:19px;color:#141a33;letter-spacing:0.400px;">Manufact...</div>
<div class="b" style="left:657px;top:611px;width:69px;height:40px;overflow:hidden;">
<div class="t" style="right:44.20px;top:15px;font-size:16.8px;line-height:19px;color:#141a33;font-weight:700;-webkit-text-stroke:0;">Campaign</div>
</div>
<div class="b" style="left:1673.80px;top:620.89px;width:113.40px;height:28.80px;background:#edf0f6;border-radius:6px;"></div>
<div class="t " style="left:1683.60px;top:626px;font-size:16.8px;line-height:19px;color:#141a33;letter-spacing:0.400px;">Manufact...</div>
<div class="b" style="left:657px;top:662px;width:69px;height:40px;overflow:hidden;-webkit-mask-image:linear-gradient(to right,#000 88.4%,rgba(0,0,0,0.05) 100%);">
<div class="t" style="left:-20.98px;top:15px;font-size:16.8px;line-height:19px;color:#141a33;font-weight:700;-webkit-text-stroke:0;">Campaigns</div>
</div>
<div class="b" style="left:1673.80px;top:671.06px;width:113.40px;height:28.80px;background:#f590b3;border-radius:6px;"></div>
<div class="t " style="left:1683.60px;top:677px;font-size:16.8px;line-height:19px;color:#141a33;letter-spacing:0.118px;">Step 2: La...</div>
<div class="b" style="left:657px;top:712px;width:69px;height:40px;overflow:hidden;-webkit-mask-image:linear-gradient(to right,#000 88.4%,rgba(0,0,0,0.05) 100%);">
<div class="t" style="left:-66.58px;top:15px;font-size:16.8px;line-height:19px;color:#141a33;font-weight:700;-webkit-text-stroke:0;">Customer Research</div>
</div>
<div class="b" style="left:892.50px;top:720.43px;width:117.50px;height:29.80px;background:#fff0b3;border-radius:7px;"></div>
<div class="b" style="left:897.10px;top:725.33px;width:7.60px;height:20.00px;background:#e6ab00;border-radius:4px;"></div>
<div class="t " style="left:912.60px;top:726px;font-size:16.8px;line-height:19px;color:#141a33;letter-spacing:0.190px;">In Progress</div>
<div class="t " style="left:1059.60px;top:727px;font-size:16.8px;line-height:19px;color:#141a33;letter-spacing:0.992px;">01/04/2025</div>
<div class="t " style="left:1189.90px;top:727px;font-size:16.8px;line-height:19px;color:#d63a47;letter-spacing:0.992px;">26/01/2024</div>
<div class="b" style="left:1673.80px;top:721.23px;width:113.40px;height:28.80px;background:#8d22ab;border-radius:6px;"></div>
<div class="t " style="left:1683.60px;top:727px;font-size:16.8px;line-height:19px;color:#ffffff;letter-spacing:0.047px;">01. Go-To ...</div>
<div class="b" style="left:892.50px;top:770.60px;width:138.20px;height:29.80px;background:#ffe3c6;border-radius:7px;"></div>
<div class="b" style="left:897.10px;top:775.50px;width:7.60px;height:20.00px;background:#e8721f;border-radius:4px;"></div>
<div class="t " style="left:912.60px;top:777px;font-size:16.8px;line-height:19px;color:#141a33;letter-spacing:0.281px;">Under Review</div>
<div class="t " style="left:1059.60px;top:777px;font-size:16.8px;line-height:19px;color:#141a33;letter-spacing:0.992px;">08/01/2024</div>
<div class="t " style="left:1189.90px;top:777px;font-size:16.8px;line-height:19px;color:#d63a47;letter-spacing:0.992px;">08/01/2024</div>
<div class="b" style="left:1673.80px;top:771.40px;width:113.40px;height:28.80px;background:#f590b3;border-radius:6px;"></div>
<div class="t " style="left:1683.60px;top:777px;font-size:16.8px;line-height:19px;color:#141a33;letter-spacing:0.133px;">Perform C...</div>
<div class="t " style="left:350.80px;top:778px;font-size:15px;line-height:17px;color:#4f5d80;">43</div>
<svg class="b" style="left:513px;top:774px;" width="24" height="22" viewBox="0 0 24 22" fill="none"><path d="M11 3.5 L3 3.5 L3 20 L20 20 L20 12" stroke="#1b2038" stroke-width="1.4" fill="none"/><path d="M17.5 2.5 L21 6 L12.5 14.5 L8.5 15.5 L9.5 11.5 Z" stroke="#1b2038" stroke-width="1.4" stroke-linejoin="round"/></svg>
<div class="b" style="left:545px;top:762px;width:181px;height:40px;overflow:hidden;-webkit-mask-image:linear-gradient(to right,#000 91.2%,rgba(0,0,0,0.05) 100%);">
<div class="t" style="left:0.10px;top:15px;font-size:16.8px;line-height:19px;color:#141a33;letter-spacing:0.35px;">01. Plan and Messaging</div>
</div>
<div class="b" style="left:892.50px;top:820.77px;width:117.50px;height:29.80px;background:#fff0b3;border-radius:7px;"></div>
<div class="b" style="left:897.10px;top:825.67px;width:7.60px;height:20.00px;background:#e6ab00;border-radius:4px;"></div>
<div class="t " style="left:912.60px;top:827px;font-size:16.8px;line-height:19px;color:#141a33;letter-spacing:0.190px;">In Progress</div>
<div class="t " style="left:1059.60px;top:827px;font-size:16.8px;line-height:19px;color:#141a33;letter-spacing:0.992px;">10/01/2024</div>
<div class="t " style="left:1189.90px;top:827px;font-size:16.8px;line-height:19px;color:#d63a47;letter-spacing:0.992px;">17/01/2024</div>
<div class="b" style="left:1673.80px;top:821.57px;width:113.40px;height:28.80px;background:#f590b3;border-radius:6px;"></div>
<div class="t " style="left:1683.60px;top:827px;font-size:16.8px;line-height:19px;color:#141a33;letter-spacing:0.133px;">Perform C...</div>
<div class="t " style="left:350.80px;top:828px;font-size:15px;line-height:17px;color:#4f5d80;">44</div>
<svg class="b" style="left:513px;top:825px;" width="24" height="22" viewBox="0 0 24 22" fill="none"><path d="M4.5 3.5 L19 3.5 L19 13 L14 18.5 L4.5 18.5 Z M19 13 L14 13 L14 18.5" stroke="#1b2038" stroke-width="1.4" stroke-linejoin="round" fill="none"/></svg>
<div class="b" style="left:545px;top:812px;width:181px;height:40px;overflow:hidden;-webkit-mask-image:linear-gradient(to right,#000 91.2%,rgba(0,0,0,0.05) 100%);">
<div class="t" style="left:0.10px;top:15px;font-size:16.8px;line-height:19px;color:#141a33;letter-spacing:0.35px;">02. Content Development</div>
</div>
<div class="b" style="left:892.50px;top:870.94px;width:104.90px;height:29.80px;background:#f7e2fa;border-radius:7px;"></div>
<div class="b" style="left:897.10px;top:875.84px;width:7.60px;height:20.00px;background:#b144d8;border-radius:4px;"></div>
<div class="t " style="left:912.60px;top:877px;font-size:16.8px;line-height:19px;color:#141a33;letter-spacing:0.484px;">Approved</div>
<div class="t " style="left:1059.60px;top:877px;font-size:16.8px;line-height:19px;color:#141a33;letter-spacing:0.992px;">10/01/2024</div>
<div class="t " style="left:1189.90px;top:877px;font-size:16.8px;line-height:19px;color:#d63a47;letter-spacing:0.992px;">19/01/2024</div>
<div class="b" style="left:1673.80px;top:871.74px;width:113.40px;height:28.80px;background:#f590b3;border-radius:6px;"></div>
<div class="t " style="left:1683.60px;top:877px;font-size:16.8px;line-height:19px;color:#141a33;letter-spacing:0.133px;">Perform C...</div>
<div class="t " style="left:350.80px;top:878px;font-size:15px;line-height:17px;color:#4f5d80;">45</div>
<svg class="b" style="left:513px;top:875px;" width="24" height="22" viewBox="0 0 24 22" fill="none"><path d="M4.5 3.5 L19 3.5 L19 13 L14 18.5 L4.5 18.5 Z M19 13 L14 13 L14 18.5" stroke="#1b2038" stroke-width="1.4" stroke-linejoin="round" fill="none"/></svg>
<div class="b" style="left:545px;top:862px;width:181px;height:40px;overflow:hidden;-webkit-mask-image:linear-gradient(to right,#000 91.2%,rgba(0,0,0,0.05) 100%);">
<div class="t" style="left:0.10px;top:15px;font-size:16.8px;line-height:19px;color:#141a33;letter-spacing:0.35px;">03. External Communications</div>
</div>
<div class="b" style="left:892.50px;top:921.11px;width:138.20px;height:29.80px;background:#ffe3c6;border-radius:7px;"></div>
<div class="b" style="left:897.10px;top:926.01px;width:7.60px;height:20.00px;background:#e8721f;border-radius:4px;"></div>
<div class="t " style="left:912.60px;top:927px;font-size:16.8px;line-height:19px;color:#141a33;letter-spacing:0.281px;">Under Review</div>
<div class="t " style="left:1059.60px;top:927px;font-size:16.8px;line-height:19px;color:#141a33;letter-spacing:0.992px;">17/01/2024</div>
<div class="t " style="left:1189.90px;top:927px;font-size:16.8px;line-height:19px;color:#d63a47;letter-spacing:0.992px;">23/01/2024</div>
<div class="b" style="left:1673.80px;top:921.91px;width:113.40px;height:28.80px;background:#f590b3;border-radius:6px;"></div>
<div class="t " style="left:1683.60px;top:927px;font-size:16.8px;line-height:19px;color:#141a33;letter-spacing:0.133px;">Perform C...</div>
<div class="t " style="left:350.80px;top:929px;font-size:15px;line-height:17px;color:#4f5d80;">46</div>
<svg class="b" style="left:510px;top:920px" width="30" height="30" viewBox="510 920 30 30" fill="none"><circle cx="520.7" cy="929.2" r="1.8" stroke="#1b2038" stroke-width="1.2"/><circle cx="528.3" cy="929.2" r="1.8" stroke="#1b2038" stroke-width="1.2"/><circle cx="517.4" cy="938.3" r="1.8" stroke="#1b2038" stroke-width="1.2"/><circle cx="531.6" cy="938.3" r="1.8" stroke="#1b2038" stroke-width="1.2"/><path d="M520.7 931 Q520.9 934 524.4 935.5 Q528.1 934 528.3 931 M524.4 935.5 V946.5 M519.2 938.3 Q520.6 938.3 520.6 940 V946.5 M529.8 938.3 Q528.3 938.3 528.3 940 V946.5" stroke="#1b2038" stroke-width="1.3"/></svg>
<div class="b" style="left:545px;top:913px;width:181px;height:40px;overflow:hidden;-webkit-mask-image:linear-gradient(to right,#000 91.2%,rgba(0,0,0,0.05) 100%);">
<div class="t" style="left:0.10px;top:15px;font-size:16.8px;line-height:19px;color:#141a33;letter-spacing:0.35px;">04. Team Enablement</div>
</div>
<div class="b" style="left:892.50px;top:971.70px;width:117.50px;height:18.30px;background:#c9f0c8;border-radius:7px;"></div>
<div class="b" style="left:1673.80px;top:971.70px;width:113.40px;height:18.30px;background:#f590b3;border-radius:6px;"></div>
<div class="b" style="left:314.00px;top:962.30px;width:1486.00px;height:13.20px;background:linear-gradient(to bottom,rgba(90,110,150,0.0),rgba(90,110,150,0.09));"></div>
<div class="b" style="left:314.00px;top:975.50px;width:1486.00px;height:50.50px;background:#ffffff;border-top:1px solid #e3e7ef;box-shadow:0 -3px 6px rgba(30,40,80,0.05);"></div>
<svg class="b" style="left:396px;top:993px;" width="18" height="18" viewBox="0 0 18 18" fill="none"><path d="M9 2v14M2 9h14" stroke="#1b2038" stroke-width="1.5"/></svg>
<div class="t " style="left:426.10px;top:993px;font-size:17px;line-height:19px;color:#1b2038;letter-spacing:0.213px;">Item</div>
<svg class="b" style="left:470px;top:985px" width="60" height="35" viewBox="470 985 60 35" fill="none"><path d="M477.2 1002.1 L482.5 996.6 L487.7 1002.1" stroke="#4f5d80" stroke-width="1.3"/><path d="M498.3 996.6 L492 1003.2 L495.4 1003.2 L495.4 1007.6 L501.4 1007.6 L501.4 1003.2 L504.7 1003.2 Z" stroke="#4f5d80" stroke-width="1.3" stroke-linejoin="round"/><path d="M508.9 996.4 H510.7 L515.8 1005 V996.4 H517.4 V1007.9 H515.6 L510.5 999.3 V1007.9 H508.9 Z" fill="#4f5d80"/></svg>
<div class="b" style="left:344.00px;top:203.50px;width:313.00px;height:538.50px;background:#ffffff;border-radius:13px;box-shadow:0 6px 18px rgba(30,40,80,0.16),0 0 2px rgba(30,40,80,0.08);"></div>
<div class="t " style="left:373.50px;top:223px;font-size:15.5px;line-height:17px;color:#46547a;letter-spacing:0.335px;-webkit-text-stroke:0.35px #46547a;">Filter by</div>
<div class="b" style="left:354.20px;top:370.20px;width:293.20px;height:38.30px;background:#eceff6;border-radius:8px;"></div>
<div class="t " style="left:403.30px;top:263px;font-size:17px;line-height:19px;color:#1b2038;letter-spacing:-0.215px;">Name</div>
<div class="t " style="left:403.30px;top:302px;font-size:17px;line-height:19px;color:#1b2038;letter-spacing:0.081px;">Assignee</div>
<div class="t " style="left:403.30px;top:341px;font-size:17px;line-height:19px;color:#1b2038;">Status</div>
<div class="t " style="left:403.30px;top:381px;font-size:17px;line-height:19px;color:#1b2038;">Start date</div>
<div class="t " style="left:403.30px;top:420px;font-size:17px;line-height:19px;color:#1b2038;">Due date</div>
<div class="t " style="left:403.30px;top:459px;font-size:17px;line-height:19px;color:#1b2038;">ICP</div>
<svg class="b" style="left:372px;top:262px;" width="22" height="20" viewBox="0 0 22 20" fill="none"><path d="M3 3.5h5.5M5.75 3.5v4.5M4.6 8h2.3" stroke="#1b2038" stroke-width="1.2"/><path d="M10.5 4.5h8M10.5 7.5h8M3 11h15.5M3 14.5h10" stroke="#1b2038" stroke-width="1.2"/></svg>
<svg class="b" style="left:372px;top:301px;" width="22" height="20" viewBox="0 0 22 20" fill="none"><circle cx="11" cy="6" r="3.4" stroke="#1b2038" stroke-width="1.4"/><path d="M3.5 17.5 Q3.5 11.5 11 11.5 Q18.5 11.5 18.5 17.5 Z" stroke="#1b2038" stroke-width="1.4"/></svg>
<svg class="b" style="left:372px;top:340px;" width="22" height="20" viewBox="0 0 22 20" fill="none"><circle cx="11" cy="10" r="8" stroke="#1b2038" stroke-width="1.4"/><path d="M7 10 L10 13 L15 7.5" stroke="#1b2038" stroke-width="1.4"/></svg>
<svg class="b" style="left:372px;top:380px;" width="22" height="20" viewBox="0 0 22 20" fill="none"><rect x="3.5" y="3" width="15" height="14.5" rx="1" stroke="#1b2038" stroke-width="1.4"/><path d="M3.5 7h15M7 1.5v3M15 1.5v3" stroke="#1b2038" stroke-width="1.4"/></svg>
<svg class="b" style="left:372px;top:419px;" width="22" height="20" viewBox="0 0 22 20" fill="none"><rect x="3.5" y="3" width="15" height="14.5" rx="1" stroke="#1b2038" stroke-width="1.4"/><path d="M3.5 7h15M7 1.5v3M15 1.5v3" stroke="#1b2038" stroke-width="1.4"/></svg>
<svg class="b" style="left:372px;top:458px;" width="22" height="20" viewBox="0 0 22 20" fill="none"><path d="M3 3.5h5.5M5.75 3.5v4.5M4.6 8h2.3" stroke="#1b2038" stroke-width="1.2"/><path d="M10.5 4.5h8M10.5 7.5h8M3 11h15.5M3 14.5h10" stroke="#1b2038" stroke-width="1.2"/></svg>
<div class="b" style="left:373.50px;top:496.60px;width:254.30px;height:1.40px;background:#e8ebf2;"></div>
<div class="b" style="left:373.50px;top:554.80px;width:254.30px;height:1.40px;background:#e8ebf2;"></div>
<div class="t " style="left:403.30px;top:518px;font-size:17px;line-height:19px;color:#1b2038;letter-spacing:0.441px;">Add filter group</div>
<svg class="b" style="left:372px;top:517px;" width="22" height="20" viewBox="0 0 22 20" fill="none"><path d="M3 3 L19 3 L13 10.5 L13 17.5 L9.5 15.5 L9.5 10.5 Z M8 3 L12 10" stroke="#1b2038" stroke-width="1.4" stroke-linejoin="round" fill="none"/></svg>
<div class="t " style="left:403.30px;top:576px;font-size:17px;line-height:19px;color:#1b2038;letter-spacing:-0.037px;">Parent</div>
<svg class="b" style="left:372px;top:575px;" width="22" height="22" viewBox="0 0 22 22" fill="none"><rect x="3" y="2.5" width="16" height="5" rx="1" stroke="#1b2038" stroke-width="1.4"/><path d="M5 7.5 L5 17.5 L8 17.5 M5 12.5 L8 12.5" stroke="#1b2038" stroke-width="1.4" fill="none"/><rect x="8.5" y="10.5" width="10.5" height="4" rx="1" stroke="#1b2038" stroke-width="1.3"/><rect x="8.5" y="15.5" width="10.5" height="4" rx="1" stroke="#1b2038" stroke-width="1.3"/></svg>
<div class="t " style="left:403.30px;top:615px;font-size:17px;line-height:19px;color:#1b2038;letter-spacing:0.353px;">Task date type</div>
<svg class="b" style="left:372px;top:614px;" width="22" height="20" viewBox="0 0 22 20" fill="none"><circle cx="11" cy="10" r="8" stroke="#1b2038" stroke-width="1.4"/><path d="M7.5 8.5 L11 12 L14.5 8.5" stroke="#1b2038" stroke-width="1.4"/></svg>
<div class="t " style="left:403.30px;top:655px;font-size:17px;line-height:19px;color:#1b2038;letter-spacing:0.407px;">Importance</div>
<svg class="b" style="left:372px;top:654px;" width="22" height="20" viewBox="0 0 22 20" fill="none"><circle cx="11" cy="10" r="8" stroke="#1b2038" stroke-width="1.4"/><path d="M7.5 8.5 L11 12 L14.5 8.5" stroke="#1b2038" stroke-width="1.4"/></svg>
<div class="t " style="left:403.30px;top:694px;font-size:17px;line-height:19px;color:#1b2038;letter-spacing:0.327px;">Billing type</div>
<svg class="b" style="left:372px;top:693px;" width="22" height="20" viewBox="0 0 22 20" fill="none"><circle cx="11" cy="10" r="8" stroke="#1b2038" stroke-width="1.4"/><path d="M13.5 6.5 Q12.5 5.5 11 5.5 Q8.5 5.5 8.5 7.7 Q8.5 9.5 11 10 Q13.7 10.5 13.7 12.4 Q13.7 14.5 11 14.5 Q9.2 14.5 8.2 13.3 M11 4v1.5M11 14.5V16" stroke="#1b2038" stroke-width="1.3" fill="none"/></svg>
<div class="b" style="left:344px;top:722px;width:313px;height:20px;overflow:hidden;">
<div class="t" style="left:59.30px;top:11px;font-size:17px;line-height:19px;color:#1b2038;">Effort</div>
</div>
<div class="b" style="left:344px;top:722px;width:313px;height:20px;overflow:hidden;"><svg class="b" style="left:28px;top:12px" width="22" height="20" viewBox="0 0 22 20" fill="none"><circle cx="11" cy="10" r="8" stroke="#1b2038" stroke-width="1.4"/><path d="M11 5v5" stroke="#1b2038" stroke-width="1.4"/></svg></div>
<div class="b" style="left:338.60px;top:153.20px;width:106.40px;height:53.60px;border:6px solid #0ccb62;border-radius:11px;box-sizing:border-box;"></div>
<div class="b" style="left:363.00px;top:503.20px;width:174.00px;height:49.40px;border:6px solid #0ccb62;border-radius:10px;box-sizing:border-box;"></div>
<div class="b" style="left:266.60px;top:145.80px;width:68.00px;height:68.00px;background:rgba(12,203,98,0.2);border-radius:50%;"></div>
<div class="b" style="left:277.10px;top:156.30px;width:47.00px;height:47.00px;background:#0ccb62;border-radius:50%;"></div>
<svg class="b" style="left:0;top:0" width="320" height="200" viewBox="0 0 320 200"><path d="M299.6 189.2 V175.2 L296.2 177.4 V173.6 L300.4 170.2 H303.6 V189.2 Z" fill="#fff"/></svg>
<div class="b" style="left:294.70px;top:492.80px;width:68.00px;height:68.00px;background:rgba(12,203,98,0.2);border-radius:50%;"></div>
<div class="b" style="left:305.20px;top:503.30px;width:47.00px;height:47.00px;background:#0ccb62;border-radius:50%;"></div>
<div class="t" style="left:308.7px;top:511.29999999999995px;width:40px;text-align:center;font-size:26px;line-height:28px;color:#fff;font-weight:700;-webkit-text-stroke:0;">2</div>
<div class="b" style="left:0.00px;top:0.00px;width:1802.00px;height:1026.00px;border-top:1px solid #111;border-left:1px solid #111;border-right:1.5px solid #111;border-bottom:1.6px solid #111;box-sizing:border-box;"></div>
</body></html>
